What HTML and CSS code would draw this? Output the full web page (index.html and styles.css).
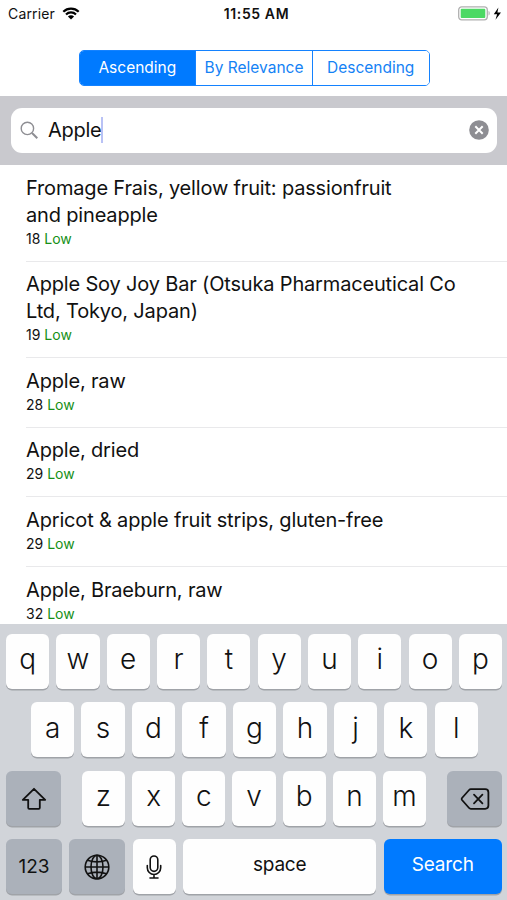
FILE: index.html
```html
<!DOCTYPE html>
<html lang="en">
<head>
  <meta charset="UTF-8" />
  <meta name="viewport" content="width=device-width, initial-scale=1.0" />
  <title>Food Search</title>
  <link rel="stylesheet" href="styles.css">
</head>
<body>
  <div class="screen">
    <header class="status">
      <div class="carrier">
        <span>Carrier</span>
        <svg class="wifi" width="18" height="13" viewBox="0 0 18 13">
          <path d="M1.3 4.7a11 11 0 0 1 15.4 0M4 7.5a7.1 7.1 0 0 1 10 0" fill="none" stroke="#000" stroke-width="2.2"/>
          <path d="M9 12.6L5.9 9.5a4.4 4.4 0 0 1 6.2 0z"/>
        </svg>
      </div>
      <div class="time">11:55 AM</div>
      <div class="battery">
        <svg width="45" height="15" viewBox="0 0 45 15">
          <rect x=".7" y=".8" width="28.6" height="13" rx="3" fill="#fff" stroke="#b0b0b0" stroke-width="1.3"/>
          <rect x="2.7" y="2.7" width="24.6" height="9.2" rx="1" fill="#4cd964"/>
          <path d="M30.6 5v4.6c1.4-.5 1.4-4.1 0-4.600z" fill="#a8a8a8"/>
          <path d="M40.400 1.500L35.800 8.300h3.300l-1.600 5.500L43 6.500h-3.600z"/>
        </svg>
      </div>
    </header>

    <nav class="segments">
      <button class="segment active">Ascending</button>
      <button class="segment">By Relevance</button>
      <button class="segment">Descending</button>
    </nav>

    <div class="search-bar">
      <div class="search-field">
        <svg width="19" height="19" viewBox="0 0 19 19" fill="none" stroke="#8e8e93">
          <circle cx="7.4" cy="7.4" r="6.2" stroke-width="1.4"/>
          <path d="M12 12l5.3 5.3" stroke-width="2"/>
        </svg>
        <span class="query">Apple</span>
        <span class="caret"></span>
        <svg class="clear" width="20" height="20" viewBox="0 0 20 20">
          <circle cx="10" cy="10" r="9.8" fill="#8e8e93"/>
          <path d="M6.3 6.3l7.4 7.4M13.7 6.3l-7.4 7.4" stroke="#fff" stroke-width="2"/>
        </svg>
      </div>
    </div>

    <ul class="results">
      <li>
        <div class="name">Fromage Frais, yellow fruit: passionfruit<br>and pineapple</div>
        <div class="gi">18 <span class="low">Low</span></div>
      </li>
      <li>
        <div class="name">Apple Soy Joy Bar (Otsuka Pharmaceutical Co<br>Ltd, Tokyo, Japan)</div>
        <div class="gi">19 <span class="low">Low</span></div>
      </li>
      <li>
        <div class="name">Apple, raw</div>
        <div class="gi">28 <span class="low">Low</span></div>
      </li>
      <li>
        <div class="name">Apple, dried</div>
        <div class="gi">29 <span class="low">Low</span></div>
      </li>
      <li>
        <div class="name">Apricot &amp; apple fruit strips, gluten-free</div>
        <div class="gi">29 <span class="low">Low</span></div>
      </li>
      <li>
        <div class="name">Apple, Braeburn, raw</div>
        <div class="gi">32 <span class="low">Low</span></div>
      </li>
    </ul>

    <div class="keyboard">
      <div class="keys">
        <div class="key">q</div><div class="key">w</div><div class="key">e</div><div class="key">r</div><div class="key">t</div>
        <div class="key">y</div><div class="key">u</div><div class="key">i</div><div class="key">o</div><div class="key">p</div>
      </div>
      <div class="keys middle">
        <div class="key">a</div><div class="key">s</div><div class="key">d</div><div class="key">f</div><div class="key">g</div>
        <div class="key">h</div><div class="key">j</div><div class="key">k</div><div class="key">l</div>
      </div>
      <div class="keys">
        <div class="key dark shift">
          <svg width="26" height="24" viewBox="0 0 26 24" fill="none" stroke="#111" stroke-width="1.8" stroke-linejoin="round">
            <path d="M13 1.800L1.800 12.800h5.400v8q0 1 1 1h9.600q1 0 1-1v-8h5.400z"/>
          </svg>
        </div>
        <div class="letters">
          <div class="key">z</div><div class="key">x</div><div class="key">c</div><div class="key">v</div>
          <div class="key">b</div><div class="key">n</div><div class="key">m</div>
        </div>
        <div class="key dark shift">
          <svg width="30" height="22" viewBox="0 0 30 22" fill="none" stroke="#111" stroke-width="1.8" stroke-linejoin="round" stroke-linecap="round">
            <path d="M10.800 1.200h14.400q3.200 0 3.200 3.200v13.200q0 3.200-3.200 3.200H10.800q-1 0-1.700-.8L2 12q-.8-1 0-2l7.100-8q.7-.8 1.700-.8z"/>
            <path d="M14 6.700l8.400 8.600M22.400 6.700L14 15.300"/>
          </svg>
        </div>
      </div>
      <div class="keys bottom">
        <div class="key dark numbers">123</div>
        <div class="key dark globe">
          <svg width="26" height="26" viewBox="0 0 26 26" fill="none" stroke="#111" stroke-width="1.6">
            <circle cx="13" cy="13" r="11.8"/>
            <ellipse cx="13" cy="13" rx="6" ry="11.8"/>
            <path d="M13 1.200v23.600M1.200 13h23.600M3.500 6.200q9.500 3.300 19 0M3.500 19.800q9.500-3.300 19 0"/>
          </svg>
        </div>
        <div class="key mic">
          <svg width="16" height="24" viewBox="0 0 16 24" fill="none" stroke="#111" stroke-width="1.6" stroke-linecap="round">
            <rect x="4.200" y="1" width="7.600" height="15.400" rx="3.800"/>
            <path d="M1.300 10.500v2.300a6.700 6.700 0 0 0 13.400 0v-2.300M8 19.500V23M4 23h8"/>
          </svg>
        </div>
        <div class="key space">space</div>
        <div class="key search">Search</div>
      </div>
    </div>
  </div>
</body>
</html>
```
FILE: styles.css
```css
* {
  box-sizing: border-box;
}
body {
  margin: 0;
  background: #fff;
  color: #111;
  font-family: Inter, Roboto, sans-serif;
}
.screen {
  display: flex;
  flex-direction: column;
  width: 507px;
  height: 900px;
  overflow: hidden;
}
.status {
  display: grid;
  grid-template-columns: 1fr auto 1fr;
  align-items: center;
  height: 28px;
  padding: 0 4px 1px 8px;
  font-size: 14px;
}
.carrier {
  display: flex;
  align-items: center;
  gap: 7px;
  letter-spacing: 0.15px;
}
.wifi {
  margin-top: -1px;
}
.time {
  font-weight: 600;
  letter-spacing: 0.6px;
  margin-right: -2px;
}
.battery {
  display: flex;
  justify-content: flex-end;
  margin-top: -1px;
}
.segments {
  display: flex;
  width: 351px;
  height: 36px;
  margin: 22px 0 0 78.5px;
  border: 1px solid #1482ff;
  border-radius: 5px;
  overflow: hidden;
  flex-shrink: 0;
}
.segment {
  flex: 1;
  padding: 0 0 1px;
  border: none;
  border-left: 1px solid #1482ff;
  background: #fff;
  color: #1482f5;
  font-family: inherit;
  font-size: 15.5px;
}
.segment:first-child {
  border-left: none;
}
.segment.active {
  background: #007aff;
  color: #fff;
}
.search-bar {
  height: 69px;
  margin-top: 10px;
  padding: 12px 10px 12px 11px;
  background: #c9c9ce;
  flex-shrink: 0;
}
.search-field {
  display: flex;
  align-items: center;
  height: 45px;
  padding: 0 8px 1px 9px;
  background: #fff;
  border-radius: 11px;
}
.query {
  margin-left: 9px;
  font-size: 20px;
  letter-spacing: -0.3px;
}
.caret {
  width: 2px;
  height: 26px;
  background: #b9c2f5;
}
.clear {
  margin-left: auto;
}
.results {
  flex: 1;
  min-height: 0;
  margin: 0;
  padding: 0 0 0 26px;
  list-style: none;
  overflow: hidden;
}
.results li {
  padding: 9.6px 0 12px;
  border-bottom: 1px solid #e9e9eb;
}
.name {
  font-size: 20px;
  line-height: 27px;
  letter-spacing: -0.17px;
  white-space: nowrap;
}
.gi {
  font-size: 14px;
  line-height: 20px;
}
.low {
  color: #169016;
}
.keyboard {
  display: flex;
  flex-direction: column;
  gap: 13px;
  height: 276px;
  padding: 9.5px 5px 0 6px;
  background: #d1d4d9;
  flex-shrink: 0;
}
.keys {
  display: flex;
  justify-content: space-between;
  height: 55.5px;
}
.middle {
  padding: 0 24px 0 25px;
}
.letters {
  display: flex;
  gap: 7px;
}
.key {
  display: flex;
  align-items: center;
  justify-content: center;
  width: 43.2px;
  height: 55px;
  padding-bottom: 4px;
  background: #fefefe;
  border-radius: 6px;
  box-shadow: 0 1.5px 0 #a0a3a8;
  font-size: 28px;
  font-weight: 350;
}
.dark {
  background: #abb1ba;
}
.shift {
  width: 55px;
  padding: 2px 0 0;
}
.bottom .key {
  font-size: 19px;
  font-weight: 400;
}
.bottom .numbers,
.bottom .globe {
  width: 56px;
  padding: 0;
}
.bottom .mic {
  padding: 0;
}
.bottom .space {
  width: 193px;
  letter-spacing: -0.2px;
}
.bottom .search {
  width: 118.5px;
  background: #007aff;
  color: #fff;
  letter-spacing: -0.2px;
}
```
